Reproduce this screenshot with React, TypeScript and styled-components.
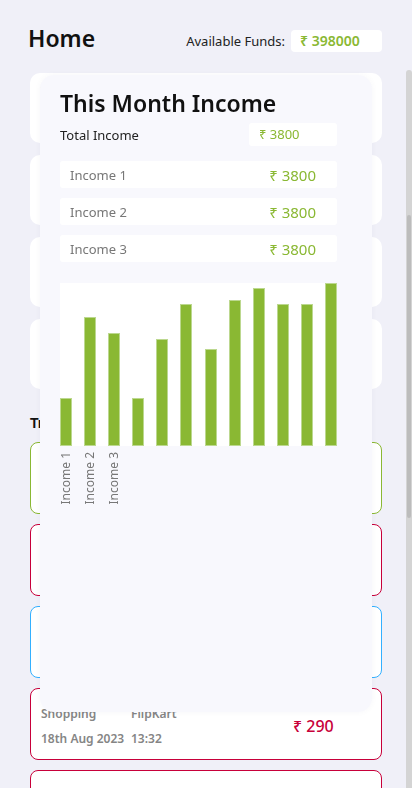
import React, { useLayoutEffect, useRef, useState } from 'react';
import styled, { createGlobalStyle } from 'styled-components';

const GREEN = '#8ab833';
const RED = '#c8003a';
const BLUE = '#33b0ff';

type TxnKind = 'income' | 'expense' | 'transfer';

const kindColor: Record<TxnKind, string> = {
  income: GREEN,
  expense: RED,
  transfer: BLUE,
};

const summaries = [
  { label: 'Total Balance', value: '₹ 398000' },
  { label: 'Total Income', value: '₹ 412000' },
  { label: 'Total Expense', value: '₹ 14000' },
  { label: 'Savings', value: '₹ 120000' },
  { label: 'This Month Income', value: '₹ 3800' },
  { label: 'This Month Expense', value: '₹ 1450' },
  { label: 'Investments', value: '₹ 80000' },
  { label: 'Loans', value: '₹ 0' },
];

const transactions: {
  kind: TxnKind;
  category: string;
  party: string;
  date: string;
  time: string;
  amount: string;
}[] = [
  { kind: 'income', category: 'Salary', party: 'Infosys', date: '20th Aug 2023', time: '09:15', amount: '₹ 3800' },
  { kind: 'expense', category: 'Food', party: 'Swiggy', date: '19th Aug 2023', time: '21:04', amount: '₹ 340' },
  { kind: 'transfer', category: 'Transfer', party: 'HDFC Bank', date: '19th Aug 2023', time: '11:20', amount: '₹ 5000' },
  { kind: 'expense', category: 'Shopping', party: 'FlipKart', date: '18th Aug 2023', time: '13:32', amount: '₹ 290' },
  { kind: 'expense', category: 'Travel', party: 'Uber', date: '17th Aug 2023', time: '18:47', amount: '₹ 210' },
  { kind: 'expense', category: 'Bills', party: 'Airtel', date: '15th Aug 2023', time: '08:30', amount: '₹ 499' },
  { kind: 'income', category: 'Refund', party: 'Amazon', date: '14th Aug 2023', time: '16:02', amount: '₹ 650' },
  { kind: 'expense', category: 'Groceries', party: 'BigBasket', date: '12th Aug 2023', time: '10:12', amount: '₹ 820' },
  { kind: 'transfer', category: 'Transfer', party: 'SBI Bank', date: '10th Aug 2023', time: '12:40', amount: '₹ 2000' },
  { kind: 'expense', category: 'Movies', party: 'PVR', date: '8th Aug 2023', time: '19:55', amount: '₹ 560' },
  { kind: 'expense', category: 'Health', party: 'Apollo', date: '5th Aug 2023', time: '14:18', amount: '₹ 380' },
  { kind: 'income', category: 'Interest', party: 'HDFC Bank', date: '1st Aug 2023', time: '07:00', amount: '₹ 120' },
];

const incomes = [
  { label: 'Income 1', amount: '₹ 3800' },
  { label: 'Income 2', amount: '₹ 3800' },
  { label: 'Income 3', amount: '₹ 3800' },
];

// bar heights in px of a 163px plot
const bars = [48, 129, 113, 48, 107, 142, 97, 146, 158, 142, 142, 163];

const GlobalStyle = createGlobalStyle`
  html, body {
    margin: 0;
    padding: 0;
    background: #f0f0f8;
    font-family: "Noto Sans", "Open Sans", sans-serif;
    color: #111;
  }
  * { box-sizing: border-box; }
`;

const App = () => {
  const listRef = useRef<HTMLDivElement>(null);
  const [thumb, setThumb] = useState({ top: 0, height: 0 });

  const measure = () => {
    const el = listRef.current;
    if (!el) return;
    const ratio = el.clientHeight / el.scrollHeight;
    setThumb({ top: el.scrollTop * ratio, height: el.clientHeight * ratio });
  };

  useLayoutEffect(() => {
    if (listRef.current) listRef.current.scrollTop = 343;
    measure();
  }, []);

  const plotW = 277;
  const plotH = 163;
  const step = (plotW - 12) / (bars.length - 1);

  return (
    <Page>
      <GlobalStyle />
      <Header>
        <Title>Home</Title>
        <Funds>
          <FundsLabel>Available Funds:</FundsLabel>
          <FundsBox>₹ 398000</FundsBox>
        </Funds>
      </Header>

      <Body>
        <List ref={listRef} onScroll={measure}>
          <Summaries>
            {summaries.map((s) => (
              <SummaryCard key={s.label}>
                <SummaryLabel>{s.label}</SummaryLabel>
                <SummaryValue>{s.value}</SummaryValue>
              </SummaryCard>
            ))}
          </Summaries>

          <SectionTitle>Transactions</SectionTitle>

          <Txns>
            {transactions.map((t, i) => (
              <TxnCard key={i} $color={kindColor[t.kind]}>
                <TxnText>{t.category}</TxnText>
                <TxnText>{t.party}</TxnText>
                <TxnAmount $color={kindColor[t.kind]}>{t.amount}</TxnAmount>
                <TxnText>{t.date}</TxnText>
                <TxnText>{t.time}</TxnText>
              </TxnCard>
            ))}
          </Txns>
        </List>
        <Rail>
          <Thumb style={{ marginTop: thumb.top, height: thumb.height }} />
        </Rail>
      </Body>

      <Modal>
        <ModalTitle>This Month Income</ModalTitle>
        <TotalRow>
          <TotalLabel>Total Income</TotalLabel>
          <TotalBox>₹ 3800</TotalBox>
        </TotalRow>

        <IncomeList>
          {incomes.map((inc) => (
            <IncomeRow key={inc.label}>
              <IncomeLabel>{inc.label}</IncomeLabel>
              <IncomeAmount>{inc.amount}</IncomeAmount>
            </IncomeRow>
          ))}
        </IncomeList>

        <Chart width={plotW} height={230} viewBox={`0 0 ${plotW} 230`}>
          <rect x={0} y={0} width={plotW} height={plotH} fill="#fff" />
          {bars.map((h, i) => (
            <rect
              key={i}
              x={Math.round(i * step) + 0.5}
              y={plotH - h + 0.5}
              width={11}
              height={h - 1}
              fill={GREEN}
              stroke="#bcd88f"
              strokeWidth={1}
            />
          ))}
          {incomes.map((inc, i) => {
            const x = Math.round(i * step) + 10;
            return (
              <text
                key={inc.label}
                x={x}
                y={169}
                transform={`rotate(-90 ${x} 169)`}
                textAnchor="end"
                fontSize={12}
                fill="#777"
                fontFamily='"Noto Sans", sans-serif'
              >
                {inc.label}
              </text>
            );
          })}
        </Chart>
      </Modal>
    </Page>
  );
};

export default App;

const Page = styled.div`
  display: flex;
  flex-direction: column;
  height: 100vh;
  overflow: hidden;
`;

const Header = styled.header`
  display: flex;
  justify-content: space-between;
  align-items: center;
  height: 70px;
  padding: 0 30px 0 28px;
  flex-shrink: 0;
`;

const Title = styled.h1`
  margin: 5px 0 0;
  font-size: 23px;
  font-weight: 600;
  line-height: 30px;
  color: #111;
`;

const Funds = styled.div`
  display: flex;
  align-items: center;
  gap: 6px;
  margin-top: 12px;
`;

const FundsLabel = styled.span`
  font-size: 13px;
  color: #222;
`;

const FundsBox = styled.div`
  width: 91px;
  height: 22px;
  padding-left: 9px;
  background: #fff;
  border-radius: 4px;
  color: ${GREEN};
  font-size: 14px;
  font-weight: 600;
  line-height: 22px;
`;

const Body = styled.div`
  flex: 1;
  min-height: 0;
  display: flex;
`;

const List = styled.div`
  flex: 1;
  overflow-y: auto;
  padding: 18px 24px 10px 30px;
  scrollbar-width: none;

  &::-webkit-scrollbar {
    display: none;
  }
`;

const Rail = styled.div`
  width: 6px;
  flex-shrink: 0;
  background: #d4d4d4;
  border-radius: 3px 3px 0 0;
`;

const Thumb = styled.div`
  width: 4px;
  margin-left: 1px;
  background: #bcbcbc;
  border-radius: 2px;
`;

const Summaries = styled.div`
  display: flex;
  flex-direction: column;
  gap: 12px;
`;

const SummaryCard = styled.div`
  height: 70px;
  padding: 10px 11px;
  background: #fff;
  border-radius: 10px;
  display: flex;
  flex-direction: column;
  justify-content: space-between;
`;

const SummaryLabel = styled.span`
  font-size: 12px;
  color: #555;
`;

const SummaryValue = styled.span`
  font-size: 16px;
  font-weight: 600;
  color: ${GREEN};
`;

const SectionTitle = styled.h2`
  margin: 24px 0 9px;
  font-family: "Liberation Sans", Arial, sans-serif;
  font-size: 14px;
  font-weight: 700;
  line-height: 20px;
  color: #111;
`;

const Txns = styled.div`
  display: flex;
  flex-direction: column;
  gap: 10px;
`;

const TxnCard = styled.div<{ $color: string }>`
  display: grid;
  grid-template-columns: 90px 1fr 78px;
  grid-template-rows: 25px 25px;
  align-items: center;
  height: 72px;
  padding: 12px 10px 8px;
  background: #fff;
  border: 1px solid ${({ $color }) => $color};
  border-radius: 8px;
`;

const TxnText = styled.span`
  font-size: 12px;
  font-weight: 600;
  color: #858585;
  white-space: nowrap;
`;

const TxnAmount = styled.span<{ $color: string }>`
  grid-column: 3;
  grid-row: 1 / 3;
  font-size: 16px;
  font-weight: 500;
  color: ${({ $color }) => $color};
`;

const Modal = styled.div`
  position: fixed;
  top: 75px;
  left: 40px;
  width: 332px;
  height: 637px;
  padding: 12px 35px 0 20px;
  background: #f8f8fd;
  border-radius: 14px;
  box-shadow: 0 0 6px rgba(40, 40, 90, 0.04);
`;

const ModalTitle = styled.h2`
  margin: 0;
  font-size: 23px;
  font-weight: 600;
  line-height: 32px;
  color: #111;
`;

const TotalRow = styled.div`
  display: flex;
  justify-content: space-between;
  align-items: center;
  margin-top: 4px;
  height: 23px;
`;

const TotalLabel = styled.span`
  font-size: 13px;
  color: #222;
`;

const TotalBox = styled.div`
  width: 88px;
  height: 23px;
  padding-left: 10px;
  background: #fff;
  border-radius: 3px;
  color: ${GREEN};
  font-size: 13px;
  line-height: 23px;
`;

const IncomeList = styled.div`
  display: flex;
  flex-direction: column;
  gap: 10px;
  margin-top: 15px;
`;

const IncomeRow = styled.div`
  display: flex;
  justify-content: space-between;
  align-items: center;
  height: 27px;
  padding: 0 21px 0 10px;
  background: #fff;
  border-radius: 3px;
`;

const IncomeLabel = styled.span`
  font-size: 13px;
  color: #777;
`;

const IncomeAmount = styled.span`
  font-size: 15px;
  color: ${GREEN};
`;

const Chart = styled.svg`
  display: block;
  margin-top: 21px;
`;
